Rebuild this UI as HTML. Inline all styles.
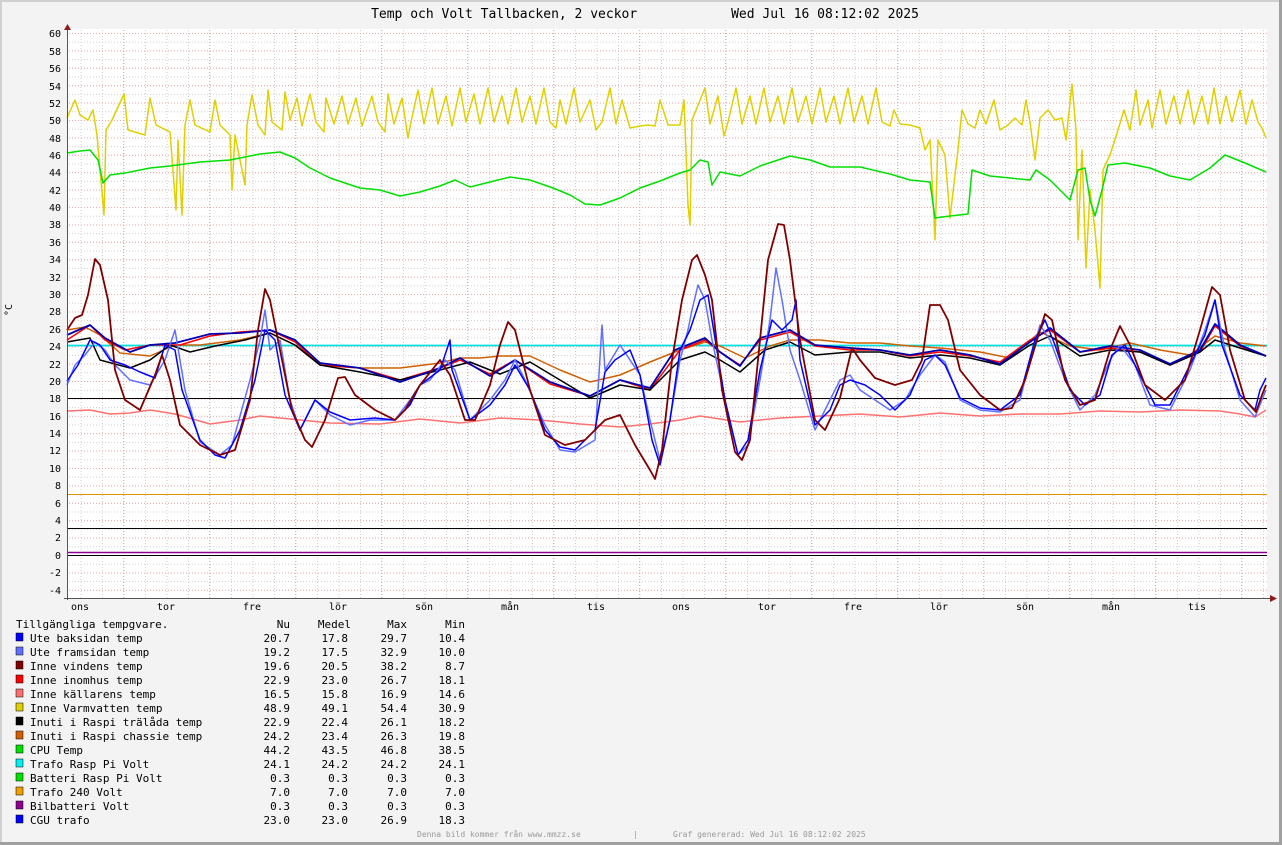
<!DOCTYPE html>
<html><head><meta charset="utf-8"><style>
html,body{margin:0;padding:0;background:#f3f3f3;}
svg{display:block;}
text{font-family:"DejaVu Sans Mono","Liberation Mono",monospace;}
</style></head><body>
<svg width="1282" height="845" viewBox="0 0 1282 845" xmlns="http://www.w3.org/2000/svg">
<defs>
<pattern id="hmin" patternUnits="userSpaceOnUse" x="0" y="33" width="3" height="8.7"><line x1="0" y1="0.5" x2="3" y2="0.5" stroke="#cfcfcf" stroke-width="1" stroke-dasharray="1,2"/></pattern>
<pattern id="vmin" patternUnits="userSpaceOnUse" x="123.5" y="0" width="21.5" height="3"><line x1="0.5" y1="0" x2="0.5" y2="3" stroke="#cfcfcf" stroke-width="1" stroke-dasharray="1,2"/></pattern>
<pattern id="hmaj" patternUnits="userSpaceOnUse" x="0" y="33" width="3" height="17.4"><line x1="0" y1="0.5" x2="3" y2="0.5" stroke="#f0a8a8" stroke-width="1" stroke-dasharray="1,2"/></pattern>
<pattern id="vmaj" patternUnits="userSpaceOnUse" x="123" y="0" width="86" height="3"><line x1="0.5" y1="0" x2="0.5" y2="3" stroke="#f0a8a8" stroke-width="1" stroke-dasharray="1,2"/></pattern>
</defs>
<rect x="0" y="0" width="1282" height="845" fill="#f3f3f3"/>
<rect x="0" y="0" width="1282" height="2" fill="#d0d0d0"/>
<rect x="0" y="0" width="2" height="845" fill="#d0d0d0"/>
<rect x="1279" y="0" width="3" height="845" fill="#a0a0a0"/>
<rect x="0" y="842" width="1282" height="3" fill="#a0a0a0"/>
<text x="645" y="18" font-size="13" text-anchor="middle" fill="#000" xml:space="preserve">Temp och Volt Tallbacken, 2 veckor            Wed Jul 16 08:12:02 2025</text>
<rect x="67" y="29" width="1200" height="569" fill="#fff"/>
<rect x="67" y="33" width="1200" height="565" fill="url(#hmin)"/>
<rect x="68" y="29" width="1199" height="569" fill="url(#vmin)"/>
<rect x="67" y="33" width="1200" height="565" fill="url(#hmaj)"/>
<rect x="68" y="29" width="1199" height="569" fill="url(#vmaj)"/>
<g font-size="10" text-anchor="end" fill="#000">
<text x="61" y="37">60</text><text x="61" y="55">58</text><text x="61" y="72">56</text><text x="61" y="90">54</text><text x="61" y="107">52</text><text x="61" y="124">50</text><text x="61" y="142">48</text><text x="61" y="159">46</text><text x="61" y="176">44</text><text x="61" y="194">42</text><text x="61" y="211">40</text><text x="61" y="228">38</text><text x="61" y="246">36</text><text x="61" y="263">34</text><text x="61" y="281">32</text><text x="61" y="298">30</text><text x="61" y="315">28</text><text x="61" y="333">26</text><text x="61" y="350">24</text><text x="61" y="368">22</text><text x="61" y="385">20</text><text x="61" y="402">18</text><text x="61" y="420">16</text><text x="61" y="437">14</text><text x="61" y="454">12</text><text x="61" y="472">10</text><text x="61" y="489">8</text><text x="61" y="507">6</text><text x="61" y="524">4</text><text x="61" y="541">2</text><text x="61" y="559">0</text><text x="61" y="576">-2</text><text x="61" y="594">-4</text>
</g>
<text x="12" y="310" font-size="10" transform="rotate(-90 12 310)" text-anchor="middle">°C</text>
<g font-size="10" text-anchor="middle">
<text x="80" y="610">ons</text><text x="166" y="610">tor</text><text x="252" y="610">fre</text><text x="338" y="610">lör</text><text x="424" y="610">sön</text><text x="510" y="610">mån</text><text x="596" y="610">tis</text><text x="681" y="610">ons</text><text x="767" y="610">tor</text><text x="853" y="610">fre</text><text x="939" y="610">lör</text><text x="1025" y="610">sön</text><text x="1111" y="610">mån</text><text x="1197" y="610">tis</text>
</g>
<line x1="67" y1="398.5" x2="1267" y2="398.5" stroke="#000" stroke-width="1"/>
<line x1="67" y1="494.5" x2="1267" y2="494.5" stroke="#e09000" stroke-width="1"/>
<line x1="67" y1="528.5" x2="1267" y2="528.5" stroke="#000" stroke-width="1"/>
<line x1="67" y1="552.5" x2="1267" y2="552.5" stroke="#900090" stroke-width="1.5"/>
<line x1="67" y1="555.5" x2="1267" y2="555.5" stroke="#000" stroke-width="1"/>
<g fill="none" stroke-width="1.5" stroke-linejoin="round">
<polyline stroke="#e0d000" points="67,118 75,100 80,115 88,120 93,110 97,135 104,215 106,130 112,120 124,94 128,130 145,135 150,98 156,125 170,132 176,210 178,140 182,215 185,125 190,100 195,125 210,132 215,100 220,125 230,135 232,190 235,135 245,185 247,125 252,95 258,125 265,135 268,90 272,122 282,130 285,92 290,120 297,98 302,126 310,94 316,122 324,132 326,98 334,124 342,96 348,124 356,98 362,126 372,96 378,122 385,132 388,94 394,124 402,98 408,138 411,122 418,90 424,124 432,88 438,124 446,96 452,126 460,88 466,122 474,94 480,124 488,88 494,122 502,96 508,124 516,88 522,122 530,96 536,124 544,88 550,122 556,128 560,100 566,124 574,88 580,122 590,100 596,130 602,122 610,88 616,124 622,100 630,128 640,126 648,125 655,126 660,100 668,125 680,125 684,100 688,205 690,225 692,120 705,88 710,124 718,96 724,136 728,122 736,88 742,124 750,96 756,124 764,88 770,122 778,96 784,124 792,88 798,122 806,96 812,124 820,88 826,122 834,96 840,124 848,88 854,122 862,96 868,124 876,88 882,122 890,126 894,110 900,124 910,125 920,128 925,150 930,140 935,240 938,140 945,155 950,218 955,175 958,150 962,110 968,124 975,128 980,110 986,124 994,100 1000,130 1008,125 1015,118 1022,125 1026,100 1030,122 1035,160 1040,118 1048,110 1055,120 1062,118 1066,140 1072,84 1076,130 1078,240 1082,150 1086,268 1090,190 1095,230 1100,288 1103,170 1110,155 1118,130 1124,110 1130,130 1136,90 1140,125 1148,100 1152,128 1160,90 1166,124 1174,96 1180,124 1188,90 1194,124 1202,96 1208,124 1214,88 1220,124 1226,96 1232,122 1240,90 1246,124 1252,100 1258,122 1262,128 1266,138"/>
<polyline stroke="#00e000" points="67,153 80,151 90,150 98,160 103,183 110,175 125,173 150,168 170,166 200,162 230,160 260,154 280,152 295,158 310,168 330,178 360,188 380,190 400,196 420,192 440,186 455,180 470,187 490,182 510,177 530,180 553,188 570,195 585,204 600,205 620,198 640,188 660,181 680,173 690,170 700,160 708,162 712,185 720,172 740,176 760,166 790,156 810,160 830,167 860,167 890,174 910,180 930,182 935,218 950,216 968,214 972,170 990,176 1010,178 1030,180 1036,170 1050,180 1060,190 1070,200 1078,170 1085,168 1090,200 1095,216 1102,190 1108,165 1125,163 1150,168 1170,176 1190,180 1210,168 1225,155 1245,163 1266,172"/>
<line x1="67" y1="345.5" x2="1267" y2="345.5" stroke="#00e0e0" stroke-width="1.8"/>
<polyline stroke="#ff7070" points="67,411 90,410 110,414 130,413 150,410 175,414 210,424 240,420 260,416 300,420 330,423 380,424 420,419 460,423 500,418 540,420 580,424 620,427 650,424 680,420 700,416 740,422 780,418 820,416 860,414 900,417 940,413 980,416 1020,414 1060,414 1100,411 1140,412 1180,410 1220,411 1240,414 1255,417 1266,410"/>
<polyline stroke="#d06000" points="67,330 85,327 100,335 120,353 150,356 175,345 200,345 240,340 270,333 295,345 320,365 360,368 400,368 440,363 460,358 480,358 500,356 530,356 560,370 590,382 620,375 650,362 680,350 705,342 720,346 745,358 770,346 790,340 820,340 850,343 880,343 910,346 940,348 980,352 1010,358 1040,332 1070,346 1100,350 1130,343 1160,350 1190,355 1215,336 1240,343 1266,346"/>
<polyline stroke="#ff0000" points="67,340 90,325 105,340 125,350 150,345 180,345 210,336 240,332 270,330 295,342 320,365 360,368 400,380 440,368 460,360 490,374 515,360 550,384 590,396 620,380 650,390 680,350 705,340 720,352 740,365 760,340 790,332 815,346 850,350 880,350 910,356 940,352 970,356 1000,362 1030,340 1050,330 1080,352 1110,348 1140,352 1170,365 1200,352 1215,326 1240,346 1266,356"/>
<polyline stroke="#000" points="67,342 90,338 100,360 130,368 150,360 170,345 190,352 215,346 245,340 270,333 295,345 320,365 360,372 400,380 440,370 470,362 500,374 530,362 560,380 590,398 620,385 650,390 680,360 705,352 720,360 740,372 765,350 790,342 815,355 850,352 880,352 910,358 940,355 970,358 1000,365 1030,345 1050,336 1080,356 1110,350 1140,352 1170,365 1200,352 1215,340 1240,348 1266,356"/>
<polyline stroke="#0000b0" stroke-width="1.8" points="67,335 90,325 105,338 130,352 150,345 175,343 210,334 240,333 270,330 295,340 320,363 360,368 400,382 440,368 460,358 490,376 515,360 550,382 590,396 620,380 650,388 675,350 705,338 720,352 740,366 760,338 790,330 815,345 850,348 880,350 910,355 940,350 970,355 1000,364 1030,342 1050,328 1080,352 1110,346 1140,350 1170,364 1200,350 1215,324 1240,345 1266,356"/>
<polyline stroke="#6070ff" points="67,385 75,365 85,355 95,342 105,350 115,365 130,380 150,385 165,360 175,330 185,390 200,442 220,455 232,445 250,380 260,340 265,310 270,350 280,340 290,400 300,430 315,400 330,415 350,425 370,420 395,420 410,400 420,385 430,380 445,360 455,370 470,420 490,400 505,380 515,360 525,380 545,425 560,450 575,452 595,440 602,325 605,370 620,345 640,375 650,420 660,460 670,420 680,360 688,330 692,310 698,285 705,300 712,340 725,400 738,455 748,445 760,380 770,320 776,268 782,300 790,350 800,380 815,430 830,400 840,380 850,375 860,390 875,400 890,410 905,400 920,375 935,355 945,362 960,400 980,410 1000,412 1020,400 1030,360 1040,325 1050,340 1065,380 1080,410 1095,395 1110,360 1120,345 1135,365 1150,405 1170,410 1190,370 1205,330 1215,300 1225,350 1240,400 1255,417 1266,390"/>
<polyline stroke="#0000ff" points="67,381 78,365 90,340 100,345 110,360 125,365 140,372 155,378 165,345 175,350 182,390 200,440 215,455 225,458 240,430 255,380 265,330 275,340 285,395 300,430 315,400 330,412 350,420 375,418 395,420 410,405 420,385 440,370 450,340 452,370 470,420 490,405 505,385 515,365 530,390 545,430 560,447 575,450 595,430 605,372 615,360 630,350 640,375 652,440 660,465 670,420 680,350 690,330 700,300 708,295 712,320 725,400 738,455 748,440 760,370 772,320 782,330 792,320 796,300 800,360 815,425 830,410 840,385 850,380 865,385 880,395 895,410 910,395 925,360 935,355 945,365 960,398 980,408 1000,410 1020,395 1035,340 1045,320 1055,345 1070,390 1085,405 1100,395 1112,355 1125,345 1140,375 1155,405 1170,405 1190,365 1205,335 1215,300 1222,345 1240,395 1255,410 1260,390 1266,378"/>
<polyline stroke="#800000" stroke-width="1.8" points="67,330 75,318 82,315 88,295 95,259 100,265 108,300 115,370 125,400 140,410 155,375 162,355 170,380 180,425 200,445 220,455 235,450 250,400 258,330 265,289 270,300 280,350 292,410 305,440 312,447 325,420 338,378 345,377 355,395 375,410 395,420 405,410 420,385 440,360 450,375 465,420 475,420 490,385 500,345 508,322 515,330 530,390 545,435 565,445 585,440 605,420 620,415 635,445 650,470 655,479 662,450 672,360 682,300 692,260 697,255 705,275 712,300 722,390 735,452 742,460 750,440 758,360 768,260 778,224 784,225 790,260 800,340 815,420 825,430 840,398 852,348 860,360 875,378 895,385 912,380 922,360 930,305 940,305 948,320 960,370 980,395 1000,410 1012,408 1025,380 1040,330 1045,314 1052,320 1065,380 1080,405 1095,400 1110,350 1120,326 1130,345 1145,385 1165,400 1185,380 1200,330 1212,287 1220,295 1230,350 1245,400 1256,412 1262,395 1266,385"/>
</g>
<line x1="67.5" y1="29" x2="67.5" y2="600" stroke="#555" stroke-width="1"/>
<line x1="64" y1="598.5" x2="1272" y2="598.5" stroke="#555" stroke-width="1"/>
<polygon points="64,30 71,30 67.5,24" fill="#8b1a1a"/>
<polygon points="1270,595 1270,602 1277,598.5" fill="#8b1a1a"/>
<g font-size="11" fill="#000" xml:space="preserve">
<text x="16" y="628">Tillgängliga tempgvare.</text>
<text x="290" y="628" text-anchor="end">Nu</text><text x="351" y="628" text-anchor="end">Medel</text><text x="407" y="628" text-anchor="end">Max</text><text x="465" y="628" text-anchor="end">Min</text>
</g>
<g font-size="11" fill="#000">
<rect x="16" y="633" width="7" height="8" fill="#0000ff" stroke="#000" stroke-width="0.5"/><text x="30" y="642">Ute baksidan temp</text><text x="290" y="642" text-anchor="end">20.7</text><text x="348" y="642" text-anchor="end">17.8</text><text x="407" y="642" text-anchor="end">29.7</text><text x="465" y="642" text-anchor="end">10.4</text>
<rect x="16" y="647" width="7" height="8" fill="#6070ff" stroke="#000" stroke-width="0.5"/><text x="30" y="656">Ute framsidan temp</text><text x="290" y="656" text-anchor="end">19.2</text><text x="348" y="656" text-anchor="end">17.5</text><text x="407" y="656" text-anchor="end">32.9</text><text x="465" y="656" text-anchor="end">10.0</text>
<rect x="16" y="661" width="7" height="8" fill="#800000" stroke="#000" stroke-width="0.5"/><text x="30" y="670">Inne vindens temp</text><text x="290" y="670" text-anchor="end">19.6</text><text x="348" y="670" text-anchor="end">20.5</text><text x="407" y="670" text-anchor="end">38.2</text><text x="465" y="670" text-anchor="end">8.7</text>
<rect x="16" y="675" width="7" height="8" fill="#ff0000" stroke="#000" stroke-width="0.5"/><text x="30" y="684">Inne inomhus temp</text><text x="290" y="684" text-anchor="end">22.9</text><text x="348" y="684" text-anchor="end">23.0</text><text x="407" y="684" text-anchor="end">26.7</text><text x="465" y="684" text-anchor="end">18.1</text>
<rect x="16" y="689" width="7" height="8" fill="#ff7070" stroke="#000" stroke-width="0.5"/><text x="30" y="698">Inne källarens temp</text><text x="290" y="698" text-anchor="end">16.5</text><text x="348" y="698" text-anchor="end">15.8</text><text x="407" y="698" text-anchor="end">16.9</text><text x="465" y="698" text-anchor="end">14.6</text>
<rect x="16" y="703" width="7" height="8" fill="#e0d000" stroke="#000" stroke-width="0.5"/><text x="30" y="712">Inne Varmvatten temp</text><text x="290" y="712" text-anchor="end">48.9</text><text x="348" y="712" text-anchor="end">49.1</text><text x="407" y="712" text-anchor="end">54.4</text><text x="465" y="712" text-anchor="end">30.9</text>
<rect x="16" y="717" width="7" height="8" fill="#000" stroke="#000" stroke-width="0.5"/><text x="30" y="726">Inuti i Raspi trälåda temp</text><text x="290" y="726" text-anchor="end">22.9</text><text x="348" y="726" text-anchor="end">22.4</text><text x="407" y="726" text-anchor="end">26.1</text><text x="465" y="726" text-anchor="end">18.2</text>
<rect x="16" y="731" width="7" height="8" fill="#d06000" stroke="#000" stroke-width="0.5"/><text x="30" y="740">Inuti i Raspi chassie temp</text><text x="290" y="740" text-anchor="end">24.2</text><text x="348" y="740" text-anchor="end">23.4</text><text x="407" y="740" text-anchor="end">26.3</text><text x="465" y="740" text-anchor="end">19.8</text>
<rect x="16" y="745" width="7" height="8" fill="#00e000" stroke="#000" stroke-width="0.5"/><text x="30" y="754">CPU Temp</text><text x="290" y="754" text-anchor="end">44.2</text><text x="348" y="754" text-anchor="end">43.5</text><text x="407" y="754" text-anchor="end">46.8</text><text x="465" y="754" text-anchor="end">38.5</text>
<rect x="16" y="759" width="7" height="8" fill="#00f0f0" stroke="#000" stroke-width="0.5"/><text x="30" y="768">Trafo Rasp Pi Volt</text><text x="290" y="768" text-anchor="end">24.1</text><text x="348" y="768" text-anchor="end">24.2</text><text x="407" y="768" text-anchor="end">24.2</text><text x="465" y="768" text-anchor="end">24.1</text>
<rect x="16" y="773" width="7" height="8" fill="#00e000" stroke="#000" stroke-width="0.5"/><text x="30" y="782">Batteri Rasp Pi Volt</text><text x="290" y="782" text-anchor="end">0.3</text><text x="348" y="782" text-anchor="end">0.3</text><text x="407" y="782" text-anchor="end">0.3</text><text x="465" y="782" text-anchor="end">0.3</text>
<rect x="16" y="787" width="7" height="8" fill="#f0a000" stroke="#000" stroke-width="0.5"/><text x="30" y="796">Trafo 240 Volt</text><text x="290" y="796" text-anchor="end">7.0</text><text x="348" y="796" text-anchor="end">7.0</text><text x="407" y="796" text-anchor="end">7.0</text><text x="465" y="796" text-anchor="end">7.0</text>
<rect x="16" y="801" width="7" height="8" fill="#900090" stroke="#000" stroke-width="0.5"/><text x="30" y="810">Bilbatteri Volt</text><text x="290" y="810" text-anchor="end">0.3</text><text x="348" y="810" text-anchor="end">0.3</text><text x="407" y="810" text-anchor="end">0.3</text><text x="465" y="810" text-anchor="end">0.3</text>
<rect x="16" y="815" width="7" height="8" fill="#0000ff" stroke="#000" stroke-width="0.5"/><text x="30" y="824">CGU trafo</text><text x="290" y="824" text-anchor="end">23.0</text><text x="348" y="824" text-anchor="end">23.0</text><text x="407" y="824" text-anchor="end">26.9</text><text x="465" y="824" text-anchor="end">18.3</text>
</g>
<text x="417" y="837" font-size="8" fill="#999" xml:space="preserve">Denna bild kommer från www.mmzz.se</text>
<text x="633" y="837" font-size="8" fill="#999">|</text>
<text x="673" y="837" font-size="8" fill="#999">Graf genererad: Wed Jul 16 08:12:02 2025</text>
</svg>
</body></html>
